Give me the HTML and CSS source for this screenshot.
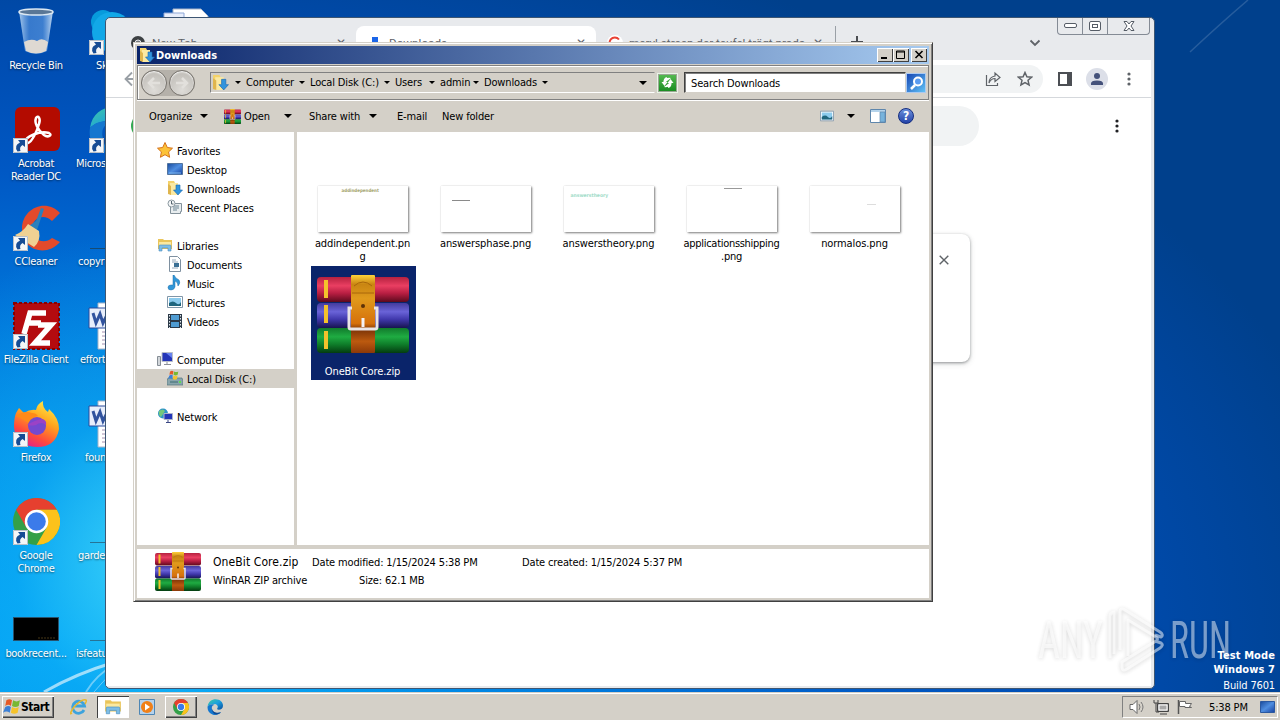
FILE: index.html
```html
<!DOCTYPE html>
<html lang="en">
<head>
  <meta charset="UTF-8" />
  <title>Downloads</title>
  <meta name="viewport" content="width=device-width, initial-scale=1.0" />
  <link rel="stylesheet" href="styles.css">
</head>
<body>
  <svg class="defs" width="0" height="0">
    <defs>
      <linearGradient id="red" x2="0" y2="1"><stop offset="0" stop-color="#b5213f"/><stop offset=".35" stop-color="#ea3f62"/><stop offset=".65" stop-color="#b81e42"/><stop offset="1" stop-color="#5c0a1d"/></linearGradient>
      <linearGradient id="blue" x2="0" y2="1"><stop offset="0" stop-color="#443c9e"/><stop offset=".35" stop-color="#6a63d8"/><stop offset=".65" stop-color="#4038ac"/><stop offset="1" stop-color="#17134f"/></linearGradient>
      <linearGradient id="green" x2="0" y2="1"><stop offset="0" stop-color="#127a2c"/><stop offset=".35" stop-color="#1fac42"/><stop offset=".65" stop-color="#0f7e2a"/><stop offset="1" stop-color="#043c10"/></linearGradient>
      <linearGradient id="belt" x2="0" y2="1"><stop offset="0" stop-color="#ffd23a"/><stop offset=".12" stop-color="#c98512"/><stop offset=".3" stop-color="#e09a1c"/><stop offset=".62" stop-color="#d6700c"/><stop offset=".7" stop-color="#7c3408"/><stop offset=".85" stop-color="#bc5a0f"/><stop offset="1" stop-color="#8c3908"/></linearGradient>
      <linearGradient id="fire" x1=".8" x2=".3" y2="1"><stop offset="0" stop-color="#fff04a"/><stop offset=".4" stop-color="#ffa51e"/><stop offset=".75" stop-color="#ff4a3c"/><stop offset="1" stop-color="#e0208c"/></linearGradient>
      <linearGradient id="edge" x2="1" y2="1"><stop offset="0" stop-color="#42c9a0"/><stop offset=".5" stop-color="#1aa0e0"/><stop offset="1" stop-color="#0a4c9c"/></linearGradient>
      <linearGradient id="screen" x2="1" y2="1"><stop offset="0" stop-color="#184a9c"/><stop offset=".5" stop-color="#4f8ee0"/><stop offset="1" stop-color="#1540a0"/></linearGradient>
      <linearGradient id="glass" x2="1"><stop offset="0" stop-color="#b9d6f2" stop-opacity=".9"/><stop offset=".3" stop-color="#4f8edb" stop-opacity=".7"/><stop offset=".7" stop-color="#5795df" stop-opacity=".7"/><stop offset="1" stop-color="#d5e7f8" stop-opacity=".9"/></linearGradient>
    </defs>
    <symbol id="rar" viewBox="0 0 92 78">
      <rect x="0" y="2" width="92" height="25" rx="4" fill="url(#red)"/>
      <rect x="0" y="28" width="92" height="25" rx="4" fill="url(#blue)"/>
      <rect x="0" y="53" width="92" height="25" rx="4" fill="url(#green)"/>
      <path d="M7 5h4v18H7zM7 30h4v18H7zM7 56h4v18H7z" fill="#f4c22c"/>
      <rect x="34" y="0" width="24" height="78" rx="1" fill="url(#belt)"/>
      <path d="M35 18h22M37 11q9-8 18 0" stroke="#a8660a" fill="none"/>
      <circle cx="46" cy="31" r="2" fill="#5d3208"/>
      <path d="M35 33h-3v19q0 2 2 2h24q2 0 2-2V33h-3" fill="none" stroke="#e9e4e6" stroke-width="3"/>
      <path d="M46 43v9" stroke="#f4f1f4" stroke-width="3"/>
    </symbol>
    <symbol id="shortcut" viewBox="0 0 15 15">
      <path d="M0 0h15v15H0z" fill="#f4f6f8"/><path d="M.5.5h14v14H.5z" fill="none" stroke="#b8bfc8"/>
      <path d="M5 2h7v7l-2.500-2q-3.500 2-2 6l-3 .500q-4-6 2.500-9z" fill="#174c94"/>
    </symbol>
    <symbol id="chrome" viewBox="0 0 48 48">
      <circle cx="24" cy="24" r="24" fill="#34a048"/>
      <path d="M3.200 12A24 24 0 0 1 44.800 12L24 12L13.600 30z" fill="#e6402f"/>
      <path d="M44.800 12A24 24 0 0 1 24 48L34.400 30L24 12z" fill="#fcc21b"/>
      <circle cx="24" cy="24" r="12" fill="#fff"/><circle cx="24" cy="24" r="9.500" fill="#3b7bea"/>
    </symbol>
    <symbol id="msedge" viewBox="0 0 48 48">
      <path d="M2 22C4 8 14 1 26 1c13 0 22 9 22 19 0 8-6 12-13 12-4 0-6-2-4-4 4-6-1-13-9-13C12 15 6 18 2 22z" fill="url(#edge)"/>
      <path d="M2 22c6-7 15-8 21-5-7 1-10 7-8 14 3 10 14 14 27 9-6 7-16 9-24 7C6 44 0 34 2 22z" fill="#1477cf"/>
      <path d="M15 24c-2 13 10 20 27 16-12 12-30 7-27-16z" fill="#104a92"/>
    </symbol>
    <symbol id="dlfolder" viewBox="0 0 16 16">
      <path d="M1 1h6l1 2v11H1z" fill="#f4d26a"/><path d="M3 3h8v12H3z" fill="#fbe9a2"/><path d="M1 14V4l3 2v9z" fill="#dfb54d"/>
      <path d="M9 5h4v5h2.500L11 15 6.500 10H9z" fill="#3294dd" stroke="#1a68b0" stroke-width=".6"/>
    </symbol>
    <symbol id="library" viewBox="0 0 16 16">
      <path d="M1 2h5l1 1h8v9H1z" fill="#eac55a"/><path d="M2 5h12v6H2z" fill="#fbe9a0"/>
      <path d="M2 14V9q0-1 1-1h10q1 0 1 1v5h-3v-3H5v3z" fill="#7dbde6" stroke="#4b8fbf" stroke-width=".6"/>
    </symbol>
    <symbol id="picture" viewBox="0 0 16 16">
      <path d="M.5 2.500h15v11H.5z" fill="#fff" stroke="#8096a8"/><path d="M2 4h12v8H2z" fill="#8ccbed"/><path d="M2 9q4-3 7 0t5-1v4H2z" fill="#20667e"/>
    </symbol>
    <symbol id="monitor" viewBox="0 0 16 16">
      <path d="M.5 2.500h15v11H.5z" fill="url(#screen)" stroke="#52749e"/><path d="M2 12h12" stroke="#7fb8ec"/>
    </symbol>
    <symbol id="flag" viewBox="0 0 16 16">
      <path d="M3 2q3-2 5 0L7 7Q5 5 2 7z" fill="#e65a26"/><path d="M9 2q3 2 6 0l-1 5q-3 2-6 0z" fill="#78b832"/>
      <path d="M2 8q3-2 5 0l-1 5q-3-2-6 0z" fill="#3c80d6"/><path d="M8 8q3 2 6 0l-1 5q-3 2-6 0z" fill="#f6c32a"/>
    </symbol>
    <symbol id="word" viewBox="0 0 48 48">
      <path d="M10 1h28l7 7v39H10z" fill="#fff" stroke="#a4b3c8"/><path d="M14 30h22M14 34h22M14 38h22M14 42h22" stroke="#a48fae"/>
      <path d="M1 6h24v20H1z" fill="#e8eefb" stroke="#284a9c"/><path d="m5 11 3 10 4-9 3 9 5-10" fill="none" stroke="#31539e" stroke-width="3"/>
    </symbol>
    <symbol id="dots" viewBox="0 0 4 16"><circle cx="2" cy="3" r="1.600"/><circle cx="2" cy="8" r="1.600"/><circle cx="2" cy="13" r="1.600"/></symbol>
  </svg>

  <div class="desktop">
    <svg class="streaks" viewBox="0 0 1280 692">
      <g fill="none" stroke="#fff">
        <path d="M44 692Q75 674 115 662" stroke-width="3" opacity=".6"/>
        <path d="M86 692Q96 675 115 664" stroke-width="2" opacity=".4"/>
        <path d="M94 692Q102 682 115 670" opacity=".4"/>
        <path d="M1190 52Q1220 24 1248 0" stroke-width="1.500" opacity=".15"/>
      </g>
    </svg>

    <div class="icons">
      <div class="icon-col">
        <div class="shortcut">
          <svg width="48" height="48" viewBox="0 0 48 48"><path d="m7 3 6 40q11 6 22 0l6-40z" fill="url(#glass)"/><path d="m12 34 2 9q10 5 20 0l2-9q-6-5-11-1-6-3-13 1z" fill="#ded9d2"/><ellipse cx="24" cy="4" rx="17" ry="3" fill="#5a7796" stroke="#dce8f2" stroke-width="1.500"/></svg>
          <span>Recycle Bin</span>
        </div>
        <div class="shortcut">
          <svg width="48" height="48" viewBox="0 0 48 48"><rect x="3" y="1" width="45" height="44" rx="6" fill="#b30b00"/><path d="M13 36c0-5 15-12 24-9 4 2-1 5-5 2-6-5-10-12-8-17 2-3 5 0 3 6-2 7-7 18-11 19-2 1-3 0-3-1z" fill="none" stroke="#fff" stroke-width="2.500"/><use href="#shortcut" x="1" y="32" width="15" height="15"/></svg>
          <span>Acrobat<br>Reader DC</span>
        </div>
        <div class="shortcut">
          <svg width="48" height="48" viewBox="0 0 48 48"><path d="m48 9-8 8c-8-8-20-3-20 8s12 16 20 9l8 4c-14 16-38 8-38-13S34-6 48 9z" fill="#e34a2b"/><path d="m29 4 3 1-7 21-8-4 7-5z" fill="#2b80bb"/><path d="m16 20 11 7q2 10-5 16L3 31q8-3 13-11z" fill="#f0d193"/><use href="#shortcut" x="1" y="32" width="15" height="15"/></svg>
          <span>CCleaner</span>
        </div>
        <div class="shortcut">
          <svg width="48" height="48" viewBox="0 0 48 48"><rect x="2" y="1" width="45" height="46" fill="#b40b0f" stroke="#870000" stroke-width="2" stroke-dasharray="3 2"/><path d="M12 32 18 11h16M15 21h14M26 23h13L23 41h15" fill="none" stroke="#fff" stroke-width="5.500"/><use href="#shortcut" x="1" y="32" width="15" height="15"/></svg>
          <span>FileZilla Client</span>
        </div>
        <div class="shortcut">
          <svg width="48" height="48" viewBox="0 0 48 48"><path d="M4 13 7 8l5 5q6-4 12-3Q25 4 31 1q-1 7 5 11l1-3q10 9 10 20-3 18-22 18Q3 46 2 27q0-9 2-14z" fill="url(#fire)"/><path d="M4 16q8-6 16-3 4 0 6 3-8 2-8 8-9-6-14-8z" fill="#ff8a18"/><circle cx="25" cy="26" r="9" fill="#7549cf"/><path d="M15 25q8-5 15-6 5 1 4 6-5-4-10 0-5 1-9 0z" fill="#9b42c6"/><use href="#shortcut" x="1" y="32" width="15" height="15"/></svg>
          <span>Firefox</span>
        </div>
        <div class="shortcut">
          <svg width="48" height="48" viewBox="0 0 48 48"><use href="#chrome" x="1" width="47" height="47"/><use href="#shortcut" x="1" y="32" width="15" height="15"/></svg>
          <span>Google<br>Chrome</span>
        </div>
        <div class="shortcut">
          <svg width="48" height="48" viewBox="0 0 48 48"><path d="M1 21h46v24H1z" fill="#27516c"/><path d="M2 22h44v22H2z"/><path d="M26 42h17" stroke="#463616" stroke-dasharray="2 1"/></svg>
          <span>bookrecent...</span>
        </div>
      </div>
      <div class="icon-col cut">
        <div class="shortcut sk">
          <svg width="48" height="48" viewBox="0 0 48 48"><circle cx="15" cy="14" r="12" fill="#079bdc"/><circle cx="24" cy="24" r="20" fill="#12a8e8"/><use href="#shortcut" x="1" y="32" width="15" height="15"/></svg>
          <span>Sk</span>
        </div>
        <div class="shortcut">
          <svg width="48" height="48" viewBox="0 0 48 48"><use href="#msedge" width="48" height="48"/><use href="#shortcut" x="1" y="32" width="15" height="15"/></svg>
          <span>Micros</span>
        </div>
        <div class="shortcut in1">
          <svg width="48" height="48" viewBox="0 0 48 48"><path d="M2 44.500h44" stroke="#174b72"/></svg>
          <span>copyri</span>
        </div>
        <div class="shortcut in3">
          <svg width="48" height="48"><use href="#word"/></svg>
          <span>effort</span>
        </div>
        <div class="shortcut in8">
          <svg width="48" height="48"><use href="#word"/></svg>
          <span>foun</span>
        </div>
        <div class="shortcut in2">
          <svg width="48" height="48" viewBox="0 0 48 48"><path d="M2 44.500h44" stroke="#267396"/></svg>
          <span>garde</span>
        </div>
        <div class="shortcut">
          <svg width="48" height="48" viewBox="0 0 48 48"><path d="M2 44.500h44" stroke="#267396"/></svg>
          <span>isfeatu</span>
        </div>
      </div>
      <div class="icon-col">
        <div class="shortcut">
          <svg width="48" height="48" viewBox="0 0 48 48"><path d="M10 1h28l7 7v39H10z" fill="#fff" stroke="#a4b3c8"/><path d="M1 5h20v20H1z" fill="#e8eefb" stroke="#8fa8d8"/></svg>
        </div>
      </div>
    </div>

    <!-- browser window -->
    <div class="browser">
      <div class="win-buttons">
        <span><svg width="13" height="6"><rect x=".5" y=".5" width="12" height="4" rx="1.500" fill="#fff" stroke="#555c66"/></svg></span>
        <span><svg width="12" height="10"><rect x=".5" y=".5" width="11" height="9" rx="1.500" fill="#fff" stroke="#555c66"/><rect x="3.500" y="3.500" width="5" height="3" fill="none" stroke="#555c66"/></svg></span>
        <span class="wide"><svg width="12" height="10" viewBox="0 0 12 10"><path d="M1 .5h3l2 2.500L8 .5h3L8 5l3 4.500H8L6 7 4 9.500H1L4 5z" fill="#fff" stroke="#555c66"/></svg></span>
      </div>
      <div class="tabstrip">
        <div class="tab">
          <svg width="16" height="16"><circle cx="8" cy="8" r="7" fill="#3c4043"/><circle cx="8" cy="8" r="3" fill="#777b80" stroke="#e8eaed"/></svg>
          <span>New Tab</span><i>✕</i>
        </div>
        <div class="tab active">
          <svg width="16" height="16"><path d="M5 2h6v5h3l-6 6-6-6h3z" fill="#1a65e8"/></svg>
          <span>Downloads</span><i>✕</i>
        </div>
        <div class="tab">
          <svg width="16" height="16"><circle cx="8" cy="8" r="8" fill="#fff"/><path d="M12 4.500A5.300 5.300 0 1 0 13 9H8" fill="none" stroke="#e94235" stroke-width="2"/></svg>
          <span>meryl streep der teufel trägt prada</span><i>✕</i>
        </div>
        <div class="newtab"><svg width="14" height="14"><path d="M7 1v12M1 7h12" stroke="#4a4d51" stroke-width="2"/></svg></div>
        <svg class="chev" width="12" height="8"><path d="m1.500 1.500 4.500 4.500 4.500-4.500" fill="none" stroke="#5f6368" stroke-width="1.800"/></svg>
      </div>
      <div class="navbar">
        <svg class="back" width="16" height="16"><path d="M15 8H2M8 1.500 1.500 8 8 14.500" fill="none" stroke="#9aa0a6" stroke-width="1.800"/></svg>
        <div class="omnibox">
          <svg width="16" height="16" viewBox="0 0 16 16"><path d="M1.500 4v10.500h11V12M4 12q0-6 6-7V2l5 4.500-5 4v-3q-4 0-6 4.500z" fill="none" stroke="#5f6368" stroke-width="1.200"/></svg>
          <svg width="16" height="16" viewBox="0 0 16 16"><path d="m8 1.500 1.900 4.300 4.700.4L11 9.300l1.100 4.600L8 11.500l-4.100 2.400L5 9.300 1.400 6.200l4.700-.4z" fill="none" stroke="#5f6368" stroke-width="1.500"/></svg>
        </div>
        <svg class="panel" width="14" height="14"><path d="M1 1h12v12H1z" fill="#fff" stroke="#4c4f54" stroke-width="2"/><path d="M9 1h4v12H9z" fill="#4c4f54"/></svg>
        <span class="avatar"><svg width="14" height="14"><circle cx="7" cy="4" r="3" fill="#44517a"/><path d="M1 13v-1.500q0-3 6-3t6 3V13z" fill="#44517a"/></svg></span>
        <svg class="dots" width="4" height="16" fill="#5f6368"><use href="#dots"/></svg>
      </div>
      <div class="page">
        <div class="page-head">
          <span class="page-logo"></span>
          <div class="searchbox"></div>
          <svg width="4" height="16" fill="#202124"><use href="#dots"/></svg>
        </div>
        <div class="card"><svg width="10" height="10"><path d="m.7.7 8.600 8.600M9.300.7.7 9.300" stroke="#5f6368" stroke-width="1.400"/></svg></div>
      </div>
    </div>

    <!-- file explorer -->
    <div class="explorer">
      <div class="titlebar">
        <svg width="16" height="16"><use href="#dlfolder"/></svg>
        <b>Downloads</b>
        <div class="caption">
          <span><svg width="10" height="9"><path d="M1 7h6v2H1z"/></svg></span>
          <span><svg width="10" height="9"><path d="M.5 1h8v7.500h-8zM.5 2h8" fill="none" stroke="#000"/></svg></span>
          <span class="gap"><svg width="10" height="9"><path d="m1.500 1 7 7M8.500 1l-7 7" stroke="#000" stroke-width="1.600"/></svg></span>
        </div>
      </div>

      <div class="addressbar">
        <div class="nav">
          <span><svg width="14" height="12"><path d="M13 6H2M7 1 2 6l5 5" fill="none" stroke="#e2e0dc" stroke-width="2.500"/></svg></span>
          <span><svg width="14" height="12"><path d="M1 6h11M7 1l5 5-5 5" fill="none" stroke="#e2e0dc" stroke-width="2.500"/></svg></span>
        </div>
        <div class="path">
          <svg width="17" height="17"><use href="#dlfolder"/></svg>
          <i class="arrow small"></i>
          <span class="crumb c1">Computer<i class="arrow small"></i></span>
          <span class="crumb c2">Local Disk (C:)<i class="arrow small"></i></span>
          <span class="crumb c3">Users<i class="arrow small"></i></span>
          <span class="crumb c4">admin<i class="arrow small"></i></span>
          <span class="crumb c5">Downloads<i class="arrow small"></i></span>
          <i class="arrow last"></i>
        </div>
        <span class="refresh"><svg width="17" height="15" viewBox="0 0 17 15"><path d="M12 3Q5 2 5.500 8M2.500 7h6l-3 4zM5 12q7 1 6.500-5M8.500 8h6l-3-4z" fill="#fff" stroke="none"/><path d="M8 3q-3 1-2.500 5M9 12q3-1 2.500-5" fill="none" stroke="#fff" stroke-width="2"/></svg></span>
        <div class="search">Search Downloads</div>
        <span class="go"><svg width="17" height="17"><circle cx="10" cy="6.500" r="4" fill="#5b9cf0" stroke="#fff" stroke-width="2"/><path d="m7 10-4 4" stroke="#fff" stroke-width="2.500"/></svg></span>
      </div>

      <div class="toolbar">
        <span class="t1">Organize<i class="arrow"></i></span>
        <span class="t2"><svg width="17" height="15" viewBox="0 0 92 78" preserveAspectRatio="none"><use href="#rar" width="92" height="78"/></svg><em>Open</em><i class="arrow"></i></span>
        <span class="t3">Share with<i class="arrow"></i></span>
        <span class="t4">E-mail</span>
        <span class="t5">New folder</span>
        <svg width="14" height="14"><use href="#picture"/></svg>
        <i class="arrow"></i>
        <svg width="16" height="14"><path d="M.5.500h15v13H.5z" fill="#fff" stroke="#5e86ac"/><path d="M1 1h14v2H1z" fill="#b5d3ea"/><path d="M10 3h5v10h-5z" fill="#77b3dc" stroke="#5e86ac" stroke-width=".7"/></svg>
        <span class="help">?</span>
      </div>

      <div class="main">
        <div class="sidebar">
          <div class="node top"><svg width="16" height="16"><path d="m8 .5 2.300 5 5.200.7-3.900 3.700 1 5.400L8 12.700l-4.600 2.600 1-5.400L.5 6.200l5.200-.7z" fill="#fcc238" stroke="#d5721b"/></svg>Favorites</div>
          <div class="node"><svg width="16" height="16"><use href="#monitor"/></svg>Desktop</div>
          <div class="node"><svg width="16" height="16"><use href="#dlfolder"/></svg>Downloads</div>
          <div class="node"><svg width="16" height="16"><path d="M3.500 4.500h11v8h-1v2h-10z" fill="#e8edef" stroke="#83919a"/><path d="M6 7h6M6 9h6M6 11h4" stroke="#6d8594"/><circle cx="4.500" cy="4.500" r="3.500" fill="#f4f6f7" stroke="#8b98a0"/><path d="M4.500 2v3h2" fill="none" stroke="#54646f"/></svg>Recent Places</div>

          <div class="node top sep"><svg width="16" height="16"><use href="#library"/></svg>Libraries</div>
          <div class="node"><svg width="16" height="16"><path d="M2.500.5h8l3 3v12h-11z" fill="#fff" stroke="#7e90a0"/><path d="M5 4h4M5 6h6M5 12h6" stroke="#97a8b8"/><path d="M7 7h5v4H7z" fill="#3c7094"/></svg>Documents</div>
          <div class="node"><svg width="16" height="16"><path d="M7 0q1 3 5 5 2 3-1 6 0-4-3-5v6q-1 3-4 3-3 0-3-2.500T4 10h2V0z" fill="#3196d8" stroke="#1f6ea8" stroke-width=".5"/></svg>Music</div>
          <div class="node"><svg width="16" height="16"><use href="#picture"/></svg>Pictures</div>
          <div class="node"><svg width="16" height="16"><path d="M1 1h14v14H1z" fill="#2c3a48"/><path d="M4 2h8v5H4zM4 9h8v5H4z" fill="#4f9cd2"/><path d="M2.500 2v13M13.500 2v13" stroke="#dfe6ec" stroke-dasharray="1.500 1.500"/></svg>Videos</div>

          <div class="node top sep"><svg width="16" height="16"><path d="M.5 5.500h3v9h-3z" fill="#d2d6da" stroke="#868e96"/><path d="M5 1.500h10.500v9H5z" fill="#2435b8" stroke="#b8bdc8"/><path d="M9 2h6v5z" fill="#6882ee"/><path d="M7 13.500h7M10 11v2" stroke="#8b9098"/></svg>Computer</div>
          <div class="node selected"><svg width="16" height="16"><path d="M1 8h14l1 3v4H0v-4z" fill="#89a5ac" stroke="#54757d" stroke-width=".7"/><path d="M3 12h8" stroke="#3d6a70"/><path d="M12 12h2" stroke="#5be04a" stroke-width="2"/><use href="#flag" x="1" y="0" width="11" height="11"/></svg>Local Disk (C:)</div>

          <div class="node top sep"><svg width="16" height="16"><circle cx="6" cy="5.500" r="5" fill="#2c93c8"/><path d="M2 3q4-3 6 0L6 6 4 9Q1 7 2 3z" fill="#73c87b"/><path d="M7 5.500h8.500v6H7z" fill="#2436b8" stroke="#aeb4ca"/><path d="M11 12v2M9 14.500h5" stroke="#3b4784"/></svg>Network</div>
        </div>

        <div class="files">
          <div class="file"><div class="thumb"><span class="th1">addindependent</span></div>addindependent.pn<br>g</div>
          <div class="file"><div class="thumb"><span class="th2"></span></div>answersphase.png</div>
          <div class="file"><div class="thumb"><span class="th3">answerstheory</span></div>answerstheory.png</div>
          <div class="file tight"><div class="thumb"><span class="th4"></span></div>applicationsshipping<br>.png</div>
          <div class="file"><div class="thumb"><span class="th5"></span></div>normalos.png</div>
          <div class="file selected"><svg width="92" height="78"><use href="#rar"/></svg>OneBit Core.zip</div>
        </div>
      </div>

      <div class="details">
        <svg width="46" height="39" viewBox="0 0 92 78"><use href="#rar" width="92" height="78"/></svg>
        <div class="info">
          <span class="name">OneBit Core.zip</span>
          <span>Date modified: 1/15/2024 5:38 PM</span>
          <span>Date created: 1/15/2024 5:37 PM</span>
          <span>WinRAR ZIP archive</span>
          <span class="size">Size: 62.1 MB</span>
        </div>
      </div>
    </div>

    <svg class="watermark" width="216" height="80" viewBox="0 0 216 80">
      <g class="wm-text">
        <text x="4" y="55" textLength="65" lengthAdjust="spacingAndGlyphs">ANY</text>
        <text x="136" y="55" textLength="61" lengthAdjust="spacingAndGlyphs">RUN</text>
      </g>
      <g class="wm-mark">
        <path d="M76 55V13q0-3 4-4v42"/>
        <path d="M86 47V9q0-5 5-2l35 22q4 3 1 5l-6-2"/>
        <path d="m121 38 6 2q3 2-1 5L93 66q-5 3-5-2v-5l34-21q3-2 0-4L94 17v36"/>
      </g>
    </svg>

    <div class="build">
      <b>Test Mode</b>
      <b>Windows 7</b>
      <span>Build 7601</span>
    </div>
  </div>

  <div class="taskbar">
    <div class="start"><svg width="18" height="18" viewBox="0 0 16 16"><use href="#flag" width="16" height="16"/></svg>Start</div>
    <div class="task"><svg width="18" height="18"><path d="M14 12a6 6 0 1 1 .5-4H5" fill="none" stroke="#3da3dd" stroke-width="2.800"/><path d="M2 15Q-2 18 4 9q8-9 12-7 1 1-1 4" fill="none" stroke="#e8b82c" stroke-width="1.500"/></svg></div>
    <div class="task pressed"><svg width="18" height="18" viewBox="0 0 16 16"><use href="#library" width="16" height="16"/></svg></div>
    <div class="task"><svg width="16" height="16"><path d="M.5.5h15v15H.5z" fill="#b5d2ec" stroke="#4e86b4"/><circle cx="8" cy="8" r="6" fill="#f08018"/><path d="m6 4.500 5 3.500-5 3.500z" fill="#fff"/></svg></div>
    <div class="task raised"><svg width="16" height="16"><use href="#chrome"/></svg></div>
    <div class="task"><svg width="16" height="16"><use href="#msedge"/></svg></div>
    <div class="tray">
      <svg width="16" height="16"><path d="M1 5.500h3l4-4v13l-4-4H1z" fill="#fff" stroke="#666"/><path d="M10 5q2 3 0 6M12 3q4 5 0 10" fill="none" stroke="#777"/></svg>
      <svg width="16" height="16"><path d="M4.500 4.500h11v8h-11z" fill="#a8a8a8" stroke="#444"/><path d="M1 1v3h4V1M3 4v9h3M7 15h7" fill="none" stroke="#444"/><path d="M6 6h8v5H6z" fill="none" stroke="#fff"/></svg>
      <svg width="16" height="16"><path d="M1.500 1v14" stroke="#555" stroke-width="1.500"/><path d="M2.500 2.500h6v2h6l-2 3 2 1H8v-1H2.500z" fill="#fff" stroke="#666"/></svg>
      <span>5:38 PM</span>
      <svg width="15" height="14"><path d="M.5 1.500h14v11H.5z" fill="url(#screen)" stroke="#2a58a0"/></svg>
    </div>
  </div>
</body>
</html>
```
FILE: styles.css
```css
* {
  box-sizing: border-box;
}
body {
  margin: 0;
  width: 1280px;
  height: 720px;
  overflow: hidden;
  font-family: "DejaVu Sans Condensed", "DejaVu Sans", sans-serif;
  font-stretch: condensed;
  font-size: 11px;
  letter-spacing: -0.15px;
  line-height: 13px;
  color: #000;
}
svg {
  display: block;
  flex: none;
}
.defs {
  position: absolute;
}
i, em {
  font-style: normal;
}
.desktop {
  position: relative;
  height: 692px;
  overflow: hidden;
  background:
    radial-gradient(ellipse 300px 330px at 150px 560px, rgba(70,220,250,.85), rgba(20,180,245,.45) 45%, transparent 100%),
    radial-gradient(ellipse 1300px 760px at 80px 640px, #00a4f8 0%, #0090ea 25%, #0072d8 45%, #0058c4 62%, #004cb0 78%, #00408c 100%);
}
.streaks {
  position: absolute;
  inset: 0;
}

/* desktop icons */
.icons {
  display: flex;
  padding: 8px 0 0;
  letter-spacing: -0.3px;
}
.icon-col {
  width: 74px;
  margin-right: 1px;
}
.shortcut {
  height: 98px;
  display: flex;
  flex-direction: column;
  align-items: center;
  color: #fff;
  text-align: center;
  white-space: nowrap;
  text-shadow: 0 1px 2px rgba(0,0,0,.55);
}
.shortcut span {
  margin-top: 3px;
}
.icon-col:first-child .shortcut {
  width: 72px;
}
.cut .shortcut {
  align-items: flex-start;
  padding-left: 1px;
}
.cut svg {
  margin-left: 12px;
}
.cut .sk span {
  margin-left: 20px;
}
.in1 span, .in2 span {
  margin-left: 2px;
}
.in3 span {
  margin-left: 4px;
}
.in8 span {
  margin-left: 9px;
}
.build {
  position: absolute;
  right: 5px;
  bottom: -1px;
  display: flex;
  flex-direction: column;
  align-items: flex-end;
  color: #fff;
  line-height: 14px;
}
.build span {
  margin-top: 2px;
}
.build b {
  letter-spacing: 0.1px;
}

/* browser window */
.browser {
  position: absolute;
  left: 105px;
  top: 17px;
  width: 1050px;
  height: 672px;
  border: 1px solid #3d5673;
  border-radius: 5px;
  background: #e8eaed;
  overflow: hidden;
  padding: 0 3px 3px 0;
  font-family: Roboto, sans-serif;
  font-stretch: normal;
  letter-spacing: 0;
}
.win-buttons {
  position: absolute;
  right: 4px;
  top: 0;
  display: flex;
  height: 17px;
  border: 1px solid #848b95;
  border-top: 0;
  border-radius: 0 0 4px 4px;
}
.win-buttons span {
  width: 25px;
  display: flex;
  align-items: center;
  justify-content: center;
  border-right: 1px solid #848b95;
}
.win-buttons .wide {
  width: 41px;
  border: 0;
}
.tabstrip {
  height: 42px;
  padding: 8px 0 0 13px;
  display: flex;
  position: relative;
}
.tab {
  width: 237px;
  height: 34px;
  padding: 0 10px 0 11px;
  display: flex;
  align-items: center;
  gap: 6px;
  color: #5f6368;
  font-size: 12px;
}
.tab.active {
  width: 240px;
  background: #fff;
  border-radius: 8px 8px 0 0;
}
.tab span {
  flex: 1;
  white-space: nowrap;
  font-size: 11.7px;
}
.newtab {
  padding: 9px 0 0 14px;
  margin-left: 2px;
  border-left: 1px solid #9aa0a6;
}
.chev {
  margin-left: 165px;
  margin-top: 13px;
}
.navbar {
  height: 38px;
  background: #fff;
  border-bottom: 1px solid #d5d8dc;
  display: flex;
  align-items: center;
  padding-left: 18px;
}
.omnibox {
  width: 800px;
  height: 28px;
  margin-left: 103px;
  border-radius: 14px;
  background: #f1f3f4;
  display: flex;
  align-items: center;
  justify-content: flex-end;
  gap: 16px;
  padding-right: 10px;
}
.panel {
  margin-left: 15px;
}
.avatar {
  width: 22px;
  height: 22px;
  margin-left: 14px;
  border-radius: 50%;
  background: #dcdfe8;
  display: flex;
  align-items: center;
  justify-content: center;
}
.dots {
  margin-left: 19px;
}
.page {
  height: 588px;
  background: #fff;
}
.page-head {
  display: flex;
  align-items: center;
  padding: 8px 32px 0 25px;
}
.page-logo {
  width: 24px;
  height: 24px;
  border-radius: 50%;
  background: #34a853;
}
.searchbox {
  width: 680px;
  height: 40px;
  margin-left: 144px;
  margin-right: 136px;
  border-radius: 20px;
  background: #f1f3f4;
}
.card {
  width: 680px;
  height: 128px;
  margin: 88px 0 0 184px;
  padding: 21px 21px;
  display: flex;
  justify-content: flex-end;
  border-radius: 8px;
  box-shadow: 0 1px 3px rgba(60,64,67,.5), 0 2px 6px rgba(60,64,67,.15);
}

/* explorer window */
.explorer {
  position: absolute;
  left: 133px;
  top: 42px;
  width: 800px;
  height: 560px;
  padding: 3px;
  display: flex;
  flex-direction: column;
  background: #d4d0c8;
  border: 1px solid #d4d0c8;
  border-right-color: #404040;
  border-bottom-color: #404040;
  box-shadow: inset 1px 1px #fff, inset -1px -1px #808080;
}
.titlebar {
  height: 18px;
  display: flex;
  align-items: center;
  padding: 0 2px;
  background: linear-gradient(90deg, #0a246a, #a6caf0);
  color: #fff;
}
.titlebar b {
  margin-left: 1px;
  letter-spacing: 0;
}
.caption {
  margin-left: auto;
  display: flex;
}
.caption span {
  width: 16px;
  height: 14px;
  padding: 2px 0 0 3px;
  background: #d4d0c8;
  box-shadow: inset 1px 1px #fff, inset -1px -1px #404040;
}
.caption .gap {
  margin-left: 2px;
}
.addressbar {
  height: 35px;
  margin-top: 1px;
  border: 1px solid #808080;
  box-shadow: inset 1px 1px #fff, 0 1px #fff;
  display: flex;
  align-items: center;
  padding-left: 3px;
}
.nav {
  display: flex;
  gap: 2px;
  border-radius: 13px;
  background: #b5b1aa;
}
.nav span {
  width: 26px;
  height: 26px;
  border-radius: 50%;
  border: 1px solid #77736d;
  background: radial-gradient(circle at 50% 80%, #dedcd8, #b9b6b0);
  box-shadow: inset 0 1px 2px #fff;
  display: flex;
  align-items: center;
  justify-content: center;
}
.path {
  width: 445px;
  height: 21px;
  margin-left: 15px;
  padding-left: 1px;
  display: flex;
  align-items: center;
  border: 1px solid #808080;
  border-right-color: #d4d0c8;
  border-bottom-color: #fff;
}
.arrow {
  border: 4px solid transparent;
  border-top-color: #000;
  border-bottom: 0;
}
.arrow.small {
  border-width: 3px 3px 0;
}
.path > .arrow.small {
  margin: 0 5px 0 6px;
}
.crumb {
  display: flex;
  align-items: center;
  justify-content: space-between;
  padding-right: 5px;
  white-space: nowrap;
}
.c1 {
  width: 64px;
}
.c2 {
  width: 85px;
}
.c3 {
  width: 45px;
}
.c4 {
  width: 44px;
}
.c5 {
  width: 69px;
}
.path .last {
  margin-left: auto;
  margin-right: 7px;
}
.refresh {
  width: 21px;
  height: 20px;
  margin-left: 2px;
  display: flex;
  align-items: center;
  justify-content: center;
  border: 1px solid #e9f5e7;
  outline: 1px solid #9aa794;
  outline-offset: -2px;
  background: linear-gradient(#57bb52, #168b20);
}
.search {
  width: 222px;
  height: 21px;
  margin-left: 6px;
  padding: 4px 6px;
  background: #fff;
  border: 1px solid #404040;
  border-right-color: #d4d0c8;
  border-bottom-color: #d4d0c8;
  box-shadow: inset 1px 1px #808080;
}
.go {
  width: 20px;
  height: 20px;
  padding: 1px;
  border: 1px solid #abc9f0;
  background: linear-gradient(135deg, #1747b4, #60c1f6);
}
.toolbar {
  height: 32px;
  display: flex;
  align-items: center;
  padding-left: 12px;
}
.toolbar > span {
  display: flex;
  align-items: center;
  white-space: nowrap;
}
.t1, .t2, .t3 {
  justify-content: space-between;
}
.t1 {
  width: 59px;
}
.t2 {
  width: 68px;
  margin-left: 16px;
}
.t2 em {
  margin-right: 11px;
}
.t3 {
  width: 68px;
  margin-left: 17px;
}
.t4 {
  width: 45px;
  margin-left: 20px;
}
.t5 {
  width: 378px;
}
.toolbar > .arrow {
  margin: 0 15px 0 13px;
}
.toolbar .help {
  width: 16px;
  height: 16px;
  margin-left: 12px;
  justify-content: center;
  border-radius: 50%;
  border: 1px solid #142d80;
  background: linear-gradient(#6a8fdc, #2443a8);
  color: #fff;
  font-weight: bold;
  font-size: 12px;
}
.main {
  height: 413px;
  display: flex;
  background: #fff;
}
.sidebar {
  width: 160px;
  padding-top: 9px;
  border-right: 3px solid #d4d0c8;
}
.node {
  height: 19px;
  display: flex;
  align-items: center;
  gap: 4px;
  padding: 1px 0 0 30px;
}
.node svg {
  margin-top: -2px;
}
.node.top {
  padding-left: 20px;
}
.node.sep {
  margin-top: 19px;
}
.node.selected {
  background: #d4d0c8;
}
.files {
  flex: 1;
  display: grid;
  grid-template-columns: repeat(5, 105px);
  grid-template-rows: 80px 114px;
  column-gap: 18px;
  padding: 54px 0 0 14px;
}
.file {
  display: flex;
  flex-direction: column;
  align-items: center;
  text-align: center;
  white-space: nowrap;
  letter-spacing: -0.1px;
  padding-right: 2px;
}
.file.tight {
  letter-spacing: -0.3px;
}
.file.selected {
  background: #0a246a;
  color: #fff;
  padding-top: 9px;
}
.file.selected svg {
  margin-bottom: 12px;
}
.thumb {
  width: 90px;
  height: 46px;
  margin-bottom: 5px;
  background: #fff;
  box-shadow: 1px 1px 2px rgba(0,0,0,.5), 0 0 1px rgba(0,0,0,.2);
  text-align: left;
  font-size: 5px;
  line-height: 6px;
  letter-spacing: 0;
}
.thumb span {
  display: block;
}
.th1 {
  padding: 2px 0 0 24px;
  font-weight: bold;
  font-size: 4.5px;
  color: #a3a36e;
}
.th2 {
  width: 18px;
  margin: 14px 0 0 11px;
  border-top: 1px solid #8a8a8a;
}
.th3 {
  padding: 6px 0 0 7px;
  font-weight: bold;
  color: #a2dcc9;
}
.th4 {
  width: 18px;
  margin: 2px 0 0 37px;
  border-top: 1px solid #999;
}
.th5 {
  width: 9px;
  margin: 18px 0 0 57px;
  border-top: 1px solid #ddd;
}
.details {
  flex: 1;
  margin-top: 4px;
  background: #fff;
  display: flex;
  padding: 3px 0 0 18px;
}
.info {
  margin-left: 12px;
  padding-top: 4px;
  display: grid;
  grid-template-columns: 99px 210px auto;
  grid-auto-rows: 18px;
  align-content: start;
  white-space: nowrap;
}
.name {
  font-size: 12px;
  letter-spacing: 0.1px;
}
.size {
  padding-left: 47px;
}

/* logo over the desktop */
.watermark {
  position: absolute;
  left: 1034px;
  top: 603px;
  opacity: .8;
  filter: drop-shadow(0 1px 2px rgba(0,0,0,.3));
}
.wm-text {
  font-family: Roboto, sans-serif;
  font-size: 52px;
  letter-spacing: 0;
  fill: #fff;
  fill-opacity: .6;
}
.wm-mark {
  fill: none;
  stroke: #fff;
  stroke-opacity: .65;
  stroke-width: 3;
  stroke-linejoin: round;
}

/* taskbar */
.taskbar {
  height: 28px;
  display: flex;
  align-items: center;
  padding: 2px 2px 0 2px;
  background: #d4d0c8;
  box-shadow: inset 0 1px #d4d0c8, inset 0 2px #fff;
}
.start {
  width: 52px;
  height: 22px;
  padding-left: 1px;
  display: flex;
  align-items: center;
  font-weight: bold;
  font-size: 12px;
  letter-spacing: -0.5px;
  box-shadow: inset 1px 1px #fff, inset -1px -1px #404040, inset -2px -2px #808080;
  margin-right: 9px;
}
.task {
  width: 32px;
  height: 22px;
  margin-right: 2px;
  display: flex;
  align-items: center;
  justify-content: center;
}
.raised {
  box-shadow: inset 1px 1px #fff, inset -1px -1px #404040, inset -2px -2px #808080;
}
.pressed {
  background: #fff;
  box-shadow: inset 1px 1px #404040, inset -1px -1px #fff;
}
.tray {
  width: 156px;
  height: 22px;
  margin-left: auto;
  padding: 0 1px 0 6px;
  display: flex;
  align-items: center;
  gap: 8px;
  border: 1px solid #808080;
  border-right-color: #fff;
  border-bottom-color: #fff;
}
.tray span {
  margin-left: 8px;
  width: 43px;
  white-space: nowrap;
}
```
